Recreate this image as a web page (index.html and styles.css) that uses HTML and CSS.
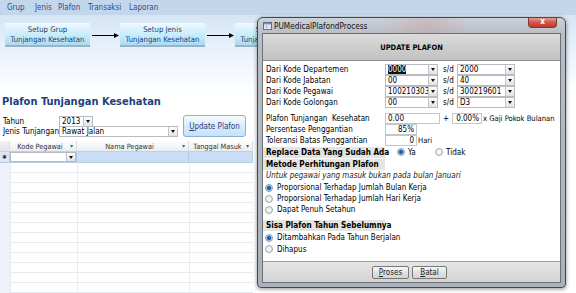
FILE: index.html
```html
<!DOCTYPE html>
<html lang="id">
<head>
    <meta charset="UTF-8">
    <meta name="viewport" content="width=device-width, initial-scale=1.0">
    <title>Plafon Tunjangan Kesehatan</title>
    <link rel="stylesheet" href="styles.css">
</head>
<body>
    <div class="app">
        <!-- Menu -->
        <div class="menubar">
            <span class="m-grup">Grup</span>
            <span class="m-jenis">Jenis</span>
            <span class="m-plafon">Plafon</span>
            <span class="m-trans">Transaksi</span>
            <span>Laporan</span>
        </div>

        <!-- Alur setup -->
        <div class="flow">
            <div class="flow-btn">Setup Grup<br>Tunjangan Kesehatan</div>
            <svg class="arrow" width="30" height="7" viewBox="0 0 30 7"><line x1="2" y1="3.5" x2="25" y2="3.5" stroke="#000" stroke-width="1"/><polygon points="24,1 29,3.5 24,6" fill="#000"/></svg>
            <div class="flow-btn">Setup Jenis<br>Tunjangan Kesehatan</div>
            <svg class="arrow" width="30" height="7" viewBox="0 0 30 7"><line x1="2" y1="3.5" x2="25" y2="3.5" stroke="#000" stroke-width="1"/><polygon points="24,1 29,3.5 24,6" fill="#000"/></svg>
            <div class="flow-btn">Setup Plafon<br>Tunjangan Kesehatan</div>
        </div>

        <h1>Plafon Tunjangan Kesehatan</h1>

        <div class="filters">
            <div class="filter-fields">
                <div class="frow">
                    <label>Tahun</label>
                    <div class="combo w-tahun"><span>2013</span><i></i></div>
                </div>
                <div class="frow">
                    <label>Jenis Tunjangan</label>
                    <div class="combo w-jenis"><span>Rawat Jalan</span><i></i></div>
                </div>
            </div>
            <button class="update-btn"><u>U</u>pdate Plafon</button>
        </div>

        <!-- Datasheet -->
        <div class="grid">
            <div class="gh sel"></div>
            <div class="gh"><span>Kode Pegawai</span><b>&#9662;</b></div>
            <div class="gh"><span>Nama Pegawai</span><b>&#9662;</b></div>
            <div class="gh"><span>Tanggal Masuk</span><b>&#9662;</b></div>

            <div class="gn sel">&#10033;</div>
            <div class="gn"><div class="combo w-kode"><span></span><i></i></div></div>
            <div class="gn"></div>
            <div class="gn"></div>
        </div>
        <div class="grid-rows"></div>
    </div>

    <!-- Dialog -->
    <div class="dialog">
        <div class="titlebar">
            <svg class="win-icon" width="9" height="8" viewBox="0 0 9 8">
                <rect x="0.5" y="0.5" width="8" height="7" fill="#fff" stroke="#5a6f8f"/>
                <rect x="1" y="1" width="7" height="1.5" fill="#6d8fc4"/>
                <line x1="1" y1="4" x2="8" y2="4" stroke="#9aaccb" stroke-width="0.6"/>
                <line x1="1" y1="5.7" x2="8" y2="5.7" stroke="#9aaccb" stroke-width="0.6"/>
                <line x1="3.5" y1="2.5" x2="3.5" y2="7.5" stroke="#9aaccb" stroke-width="0.6"/>
            </svg>
            <span class="title">PUMedicalPlafondProcess</span>
            <div class="close">x</div>
        </div>
        <div class="client">
            <div class="dlg-head">UPDATE PLAFON</div>
            <div class="form">
                <div class="row">
                    <label>Dari Kode Departemen</label>
                    <div class="combo c1"><span><em class="hl">0000</em></span><i></i></div>
                    <span class="sd">s/d</span>
                    <div class="combo c2"><span>2000</span><i></i></div>
                </div>
                <div class="row">
                    <label>Dari Kode Jabatan</label>
                    <div class="combo c1"><span>00</span><i></i></div>
                    <span class="sd">s/d</span>
                    <div class="combo c2"><span>40</span><i></i></div>
                </div>
                <div class="row">
                    <label>Dari Kode Pegawai</label>
                    <div class="combo c1"><span>100210303</span><i></i></div>
                    <span class="sd">s/d</span>
                    <div class="combo c2"><span>300219601</span><i></i></div>
                </div>
                <div class="row">
                    <label>Dari Kode Golongan</label>
                    <div class="combo c1"><span>00</span><i></i></div>
                    <span class="sd">s/d</span>
                    <div class="combo c2"><span>D3</span><i></i></div>
                </div>

                <div class="row gap">
                    <label>Plafon Tunjangan&nbsp; Kesehatan</label>
                    <div class="box w-plafon">0.00</div>
                    <span class="plus">+</span>
                    <div class="box w-pct num">0.00%</div>
                    <span class="after">x Gaji Pokok Bulanan</span>
                </div>
                <div class="row">
                    <label>Persentase Penggantian</label>
                    <div class="box w-small num">85%</div>
                </div>
                <div class="row">
                    <label>Toleransi Batas Penggantian</label>
                    <div class="box w-small num">0</div>
                    <span class="after">Hari</span>
                </div>

                <div class="row bold-row">
                    <label class="bl">Replace Data Yang Sudah Ada</label>
                    <span class="opt opt-ya"><i class="radio on"></i>Ya</span>
                    <span class="opt"><i class="radio"></i>Tidak</span>
                </div>
                <div class="row bold-row">
                    <label class="bl">Metode Perhitungan Plafon</label>
                </div>
                <div class="row note">Untuk pegawai yang masuk bukan pada bulan Januari</div>
                <div class="radios">
                    <span class="opt"><i class="radio on"></i>Proporsional Terhadap Jumlah Bulan Kerja</span>
                    <span class="opt"><i class="radio"></i>Proporsional Terhadap Jumlah Hari Kerja</span>
                    <span class="opt"><i class="radio"></i>Dapat Penuh Setahun</span>
                </div>

                <div class="row bold-row sisa">
                    <label class="bl">Sisa Plafon Tahun Sebelumnya</label>
                </div>
                <div class="radios tight">
                    <span class="opt"><i class="radio on"></i>Ditambahkan Pada Tahun Berjalan</span>
                    <span class="opt"><i class="radio"></i>Dihapus</span>
                </div>
            </div>
            <div class="dlg-foot">
                <button class="btn-proses"><u>P</u>roses</button>
                <button class="btn-batal"><u>B</u>atal</button>
            </div>
        </div>
    </div>
</body>
</html>
```

FILE: styles.css
```css
* {
    box-sizing: border-box;
}
body {
    margin: 0;
    width: 576px;
    height: 293px;
    overflow: hidden;
    position: relative;
    font-family: "DejaVu Sans Condensed", "Liberation Sans", sans-serif;
    font-size: 8px;
    color: #000;
    background: #fff;
}
.app {
    height: 293px;
    background: linear-gradient(#d6e5f5 15px, #e6f0f9 45px, #fbfdff 85px, #fff 100px);
}

/* menu */
.menubar {
    height: 15px;
    display: flex;
    align-items: center;
    padding-left: 7px;
    background: #c3d6ec;
    color: #2d4f88;
}
.menubar span {
    flex: none;
}
.m-grup { width: 28px; }
.m-jenis { width: 23px; }
.m-plafon { width: 30px; }
.m-trans { width: 41px; }

/* setup flow */
.flow {
    display: flex;
    align-items: center;
    padding: 8px 0 0 5px;
}
.flow-btn {
    flex: none;
    width: 85px;
    height: 24px;
    padding-top: 2px;
    text-align: center;
    font-size: 7.7px;
    line-height: 10px;
    color: #1e3f74;
    background: linear-gradient(#effafe, #c4eafb 60%, #a9dcf4);
    border-bottom: 2px solid #9fb2c4;
}
.arrow {
    flex: none;
    display: block;
}

h1 {
    margin: 48px 0 0 2px;
    height: 14px;
    font-size: 11px;
    line-height: 14px;
    font-weight: bold;
    color: #203f7c;
}

/* filters */
.filters {
    display: flex;
    margin-top: 6px;
}
.filter-fields {
    padding-top: 1px;
}
.frow {
    display: flex;
    align-items: center;
    height: 10.5px;
}
.frow label {
    width: 59px;
    padding-left: 3px;
}
.w-tahun { width: 34px; }
.w-jenis { width: 119px; }
.update-btn {
    margin-left: 5px;
    width: 63px;
    height: 22px;
    font: inherit;
    color: #1f3f7f;
    background: linear-gradient(#f5fbff, #d9ecfa 50%, #c6e1f6);
    border: 1px solid #8cafd6;
    border-radius: 3px;
    padding: 0;
}

/* combo boxes */
.combo {
    height: 11px;
    display: flex;
    background: #fff;
    border: 1px solid #b8bcc2;
}
.combo span {
    flex: 1;
    padding-left: 2px;
    line-height: 9px;
    white-space: nowrap;
    overflow: hidden;
}
.combo i {
    flex: none;
    width: 9px;
    position: relative;
    background: linear-gradient(#fdfdfd, #e3e3e3);
    border-left: 1px solid #c4c4c4;
}
.combo i::after {
    content: "";
    position: absolute;
    left: 2px;
    top: 3px;
    border-left: 2px solid transparent;
    border-right: 2px solid transparent;
    border-top: 3px solid #111;
}
.hl {
    font-style: normal;
    background: #111;
    color: #fff;
}

/* datasheet */
.grid {
    display: grid;
    grid-template-columns: 10px 67px 112px 64px;
    grid-template-rows: 11px 11px;
    margin-top: 4px;
    width: 253px;
}
.gh {
    display: flex;
    align-items: center;
    justify-content: center;
    position: relative;
    padding-right: 6px;
    font-size: 7.3px;
    color: #333;
    white-space: nowrap;
    background: linear-gradient(#fdfdfd, #e9edf2);
    border-right: 1px solid #d8dde3;
    border-bottom: 1px solid #c9ced6;
}
.gh b {
    position: absolute;
    right: 3px;
    top: 1px;
    font-weight: normal;
    font-size: 6px;
    color: #555;
}
.gh.sel {
    background: linear-gradient(#f3f3f6, #e2e4ea);
}
.gn {
    background: #c9def6;
    border-right: 1px solid #b6cbe6;
    border-bottom: 1px solid #b6cbe6;
}
.gn.sel {
    font-size: 6px;
    line-height: 10px;
    text-align: center;
    color: #333;
    background: #dce6f5;
}
.w-kode {
    width: 66px;
    margin-left: 0;
    height: 10px;
}
.grid-rows {
    width: 253px;
    height: 140px;
    background:
        linear-gradient(90deg, #eef0fa 10px, transparent 10px),
        linear-gradient(90deg, transparent 10px, #e6e9f0 10px, #e6e9f0 11px, transparent 11px, transparent 77px, #e9ecf0 77px, #e9ecf0 78px, transparent 78px, transparent 189px, #e9ecf0 189px, #e9ecf0 190px, transparent 190px),
        repeating-linear-gradient(#fff 0 9px, #e6e9ed 9px 10px);
}

/* dialog */
.dialog {
    position: absolute;
    left: 257px;
    top: 17px;
    width: 309px;
    height: 271px;
    display: flex;
    flex-direction: column;
    border: 1px solid #41474e;
    border-radius: 6px 6px 4px 4px;
    background: linear-gradient(#cdd2d8, #b8bec6 16px, #aab1ba);
    box-shadow: 0 1px 4px rgba(0, 0, 0, 0.45);
}
.titlebar {
    height: 15px;
    display: flex;
    align-items: flex-start;
    padding-left: 5px;
    background: linear-gradient(90deg, transparent 40%, rgba(200, 150, 150, 0.35) 55%, transparent 70%);
}
.win-icon {
    margin-top: 4px;
    flex: none;
}
.title {
    margin: 3px 0 0 2px;
    font-size: 8.2px;
    line-height: 10px;
    color: #111;
}
.close {
    margin: 0 8px 0 auto;
    width: 29px;
    height: 10px;
    border: 1px solid #7a3a33;
    border-top: none;
    border-radius: 0 0 4px 4px;
    background: linear-gradient(#e89a8c, #d0584a 50%, #c0392b);
    color: #fff;
    font-weight: bold;
    font-size: 8px;
    line-height: 8px;
    text-align: center;
}
.client {
    flex: 1;
    margin: 0 4px 4px;
    display: flex;
    flex-direction: column;
    background: #fff;
    border: 1px solid #6c7177;
}
.dlg-head {
    height: 27px;
    flex: none;
    display: flex;
    align-items: center;
    justify-content: center;
    font-weight: bold;
    font-size: 7.5px;
    background: linear-gradient(#dcdcdc, #cbcbcb 60%, #c2c2c2);
    border-bottom: 1px solid #8d8d8d;
}
.form {
    flex: 1;
    padding-top: 3px;
}
.row {
    display: flex;
    align-items: center;
    height: 11px;
    white-space: nowrap;
}
.row label {
    flex: none;
    width: 122px;
    padding-left: 3px;
}
.row.gap {
    margin-top: 5px;
}
.c1 { width: 53px; }
.c2 { width: 58px; }
.sd {
    width: 14px;
    margin-left: 5px;
}
.box {
    height: 11px;
    padding: 0 2px;
    line-height: 9px;
    border: 1px solid #c3c6ca;
    background: #fff;
}
.box.num {
    text-align: right;
}
.w-plafon { width: 55px; }
.w-pct { width: 30px; }
.w-small { width: 32px; }
.plus {
    width: 12px;
    text-align: center;
}
.after {
    margin-left: 1px;
    font-size: 7.6px;
}
.bold-row {
    height: 12px;
}
.row label.bl {
    height: 11px;
    line-height: 11px;
    font-weight: bold;
    font-size: 8.1px;
    background: #e4e4e1;
}
.opt {
    display: flex;
    align-items: center;
    gap: 3px;
}
.opt-ya {
    margin-left: 12px;
    width: 38px;
}
.radio {
    flex: none;
    width: 8px;
    height: 8px;
    border-radius: 50%;
    border: 1px solid #a4a7ab;
    background: radial-gradient(#ffffff, #dcdde0);
}
.radio.on {
    border-color: #8a9bb0;
    background: radial-gradient(#1f5fb0 0 1.6px, #7aa6dc 2.2px, #e3ecf6 3.2px);
}
.note {
    font-style: italic;
    padding-left: 3px;
    color: #222;
}
.radios {
    display: flex;
    flex-direction: column;
    margin-top: 1px;
    padding-left: 2px;
}
.radios .opt {
    height: 11px;
    gap: 4px;
}
.radios.tight .opt {
    height: 11.5px;
}
.sisa {
    margin-top: 4px;
}
.dlg-foot {
    height: 21px;
    flex: none;
    display: flex;
    align-items: center;
    justify-content: center;
    gap: 3px;
    padding-right: 4px;
    background: linear-gradient(#e5e5e5, #d4d4d4);
    border-top: 1px solid #9c9c9c;
}
.dlg-foot button {
    height: 13px;
    padding: 0;
    font: inherit;
    color: #222;
    background: linear-gradient(#f7f7f7, #e2e2e2 50%, #d3d3d3);
    border: 1px solid #777;
    border-radius: 2px;
}
.btn-proses { width: 37px; }
.btn-batal { width: 35px; }
```
